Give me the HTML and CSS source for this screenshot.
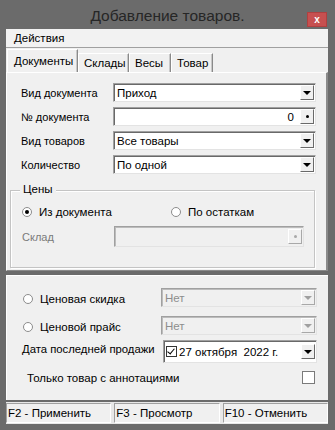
FILE: index.html
```html
<!DOCTYPE html>
<html lang="ru">
<head>
    <meta charset="UTF-8">
    <title>Добавление товаров.</title>
    <link rel="stylesheet" href="styles.css">
</head>
<body>
    <div class="window">
        <div class="titlebar">
            <div class="title">Добавление товаров.</div>
            <button class="close-btn">x</button>
        </div>

        <div class="client">
            <div class="menubar"><span class="menu-item">Действия</span></div>

            <div class="tabs">
                <div class="tab active">Документы</div>
                <div class="tab tab-sklad">Склады</div>
                <div class="tab tab-vesy">Весы</div>
                <div class="tab tab-tovar">Товар</div>
            </div>

            <div class="page">
                <div class="row">
                    <div class="label">Вид документа</div>
                    <div class="field">
                        <span class="field-text">Приход</span>
                        <span class="drop-btn"><span class="arrow"></span></span>
                    </div>
                </div>
                <div class="row">
                    <div class="label">№ документа</div>
                    <div class="field">
                        <span class="field-text num">0</span>
                        <span class="drop-btn"><span class="dot"></span></span>
                    </div>
                </div>
                <div class="row">
                    <div class="label">Вид товаров</div>
                    <div class="field">
                        <span class="field-text">Все товары</span>
                        <span class="drop-btn"><span class="arrow"></span></span>
                    </div>
                </div>
                <div class="row">
                    <div class="label">Количество</div>
                    <div class="field">
                        <span class="field-text">По одной</span>
                        <span class="drop-btn"><span class="arrow"></span></span>
                    </div>
                </div>

                <div class="group">
                    <div class="group-title">Цены</div>
                    <div class="radio-row">
                        <label class="radio-label col-left"><span class="radio checked"></span>Из документа</label>
                        <label class="radio-label"><span class="radio"></span>По остаткам</label>
                    </div>
                    <div class="row sklad-row">
                        <div class="label disabled-text">Склад</div>
                        <div class="field disabled tall">
                            <span class="field-text"></span>
                            <span class="drop-btn"><span class="dot grey"></span></span>
                        </div>
                    </div>
                </div>
            </div>
        </div>

        <div class="panel">
            <div class="prow">
                <label class="radio-label wide"><span class="radio"></span>Ценовая скидка</label>
                <div class="field disabled short">
                    <span class="field-text">Нет</span>
                    <span class="drop-btn"><span class="arrow grey"></span></span>
                </div>
            </div>
            <div class="prow">
                <label class="radio-label wide"><span class="radio"></span>Ценовой прайс</label>
                <div class="field disabled short">
                    <span class="field-text">Нет</span>
                    <span class="drop-btn"><span class="arrow grey"></span></span>
                </div>
            </div>
            <div class="prow date-row">
                <div class="date-label">Дата последней продажи</div>
                <div class="field date">
                    <span class="check checked"></span>
                    <span class="field-text">27 октября&nbsp; 2022 г.</span>
                    <span class="drop-btn"><span class="arrow"></span></span>
                </div>
            </div>
            <div class="prow check-row">
                <div class="check-label">Только товар с аннотациями</div>
                <span class="check big"></span>
            </div>
        </div>

        <div class="statusbar">
            <div class="status-cell">F2 - Применить</div>
            <div class="status-cell">F3 - Просмотр</div>
            <div class="status-cell">F10 - Отменить</div>
        </div>
    </div>
</body>
</html>
```

FILE: styles.css
```css
body {
    margin: 0;
    padding: 0;
    font-family: 'Liberation Sans', Arial, sans-serif;
    font-size: 11px;
    color: #000;
    background: #6b6b6b;
}

.window {
    width: 335px;
    height: 430px;
    background: #6b6b6b;
    position: relative;
}

/* заголовок окна */
.titlebar {
    height: 29px;
    display: flex;
    align-items: center;
    justify-content: center;
}

.title {
    font-size: 15.5px;
    color: #262626;
    margin-top: 3px;
}

.close-btn {
    position: absolute;
    top: 12px;
    right: 8px;
    width: 20px;
    height: 15px;
    padding: 0;
    border: 1px solid #b04040;
    background: #c75050;
    color: #fff;
    font-family: 'Liberation Sans', Arial, sans-serif;
    font-size: 10px;
    font-weight: 700;
    line-height: 11px;
}

/* клиентская часть */
.client {
    margin: 0 7px 0 6px;
    background: #f0f0f0;
}

.menubar {
    height: 18px;
    border-bottom: 1px solid #a0a0a0;
    display: flex;
    align-items: center;
    background: #f2f2f2;
}

.menu-item {
    padding-left: 8px;
    font-size: 11.5px;
}

.tabs {
    height: 24px;
    display: flex;
    align-items: flex-end;
    padding-left: 1px;
}

.tab {
    height: 19px;
    line-height: 19px;
    box-sizing: border-box;
    border-top: 1px solid #fff;
    border-left: 1px solid #fff;
    border-right: 1px solid #8a8a8a;
    box-shadow: inset -1px 0 0 #c8c8c8;
    padding-left: 5px;
    width: 51px;
    font-size: 11.5px;
}

.tab.active {
    height: 23px;
    line-height: 23px;
    width: 71px;
    padding-left: 6px;
}

.tab-vesy {
    width: 42px;
}

.tab-tovar {
    width: 42px;
}

.page {
    height: 199px;
    box-sizing: border-box;
    border-top: 1px solid #fff;
    border-left: 1px solid #fff;
    border-right: 2px solid #8a8a8a;
    border-bottom: 1px solid #8a8a8a;
    padding: 10px 10px 0 14px;
}

.row {
    display: flex;
    align-items: center;
    height: 19px;
    margin-bottom: 5px;
}

.label {
    width: 92px;
    flex-shrink: 0;
}

.field {
    flex: 1;
    height: 19px;
    box-sizing: border-box;
    background: #fff;
    border-top: 1px solid #a0a0a0;
    border-left: 1px solid #a0a0a0;
    border-right: 1px solid #e3e3e3;
    border-bottom: 1px solid #e3e3e3;
    box-shadow: inset 1px 1px 0 #696969;
    display: flex;
    align-items: center;
}

.field-text {
    flex: 1;
    padding-left: 3px;
    white-space: nowrap;
    font-size: 11.5px;
}

.field-text.num {
    text-align: right;
    padding-right: 6px;
}

.drop-btn {
    width: 14px;
    height: 15px;
    margin-right: 1px;
    box-sizing: border-box;
    background: #f0f0f0;
    border-top: 1px solid #fff;
    border-left: 1px solid #fff;
    border-right: 1px solid #696969;
    border-bottom: 1px solid #696969;
    display: flex;
    align-items: center;
    justify-content: center;
}

.arrow {
    width: 0;
    height: 0;
    border-left: 4px solid transparent;
    border-right: 4px solid transparent;
    border-top: 4px solid #000;
    margin-top: 1px;
}

.arrow.grey {
    border-top-color: #a0a0a0;
}

.dot {
    width: 3px;
    height: 3px;
    border-radius: 50%;
    background: #000;
}

.dot.grey {
    background: #a8a8a8;
}

/* группа «Цены» */
.group {
    position: relative;
    margin: 16px 1px 0 -11px;
    padding: 14px 10px 0 11px;
    height: 62px;
    border: 1px solid #c4c4c4;
    box-shadow: 1px 1px 0 #fff, inset 1px 1px 0 #fff;
}

.group-title {
    position: absolute;
    top: -8px;
    left: 9px;
    padding: 0 3px;
    background: #f0f0f0;
    font-size: 11.5px;
}

.radio-row {
    display: flex;
    align-items: center;
    height: 14px;
    margin-bottom: 7px;
}

.radio-label {
    display: flex;
    align-items: center;
    font-size: 11.5px;
}

.col-left {
    width: 149px;
}

.radio {
    width: 10px;
    height: 10px;
    box-sizing: border-box;
    border-radius: 50%;
    background: #fff;
    border: 1px solid #8c8c8c;
    margin-right: 7px;
    display: flex;
    align-items: center;
    justify-content: center;
}

.radio.checked::after {
    content: '';
    width: 4px;
    height: 4px;
    border-radius: 50%;
    background: #000;
}

.sklad-row {
    height: 21px;
}

.field.tall {
    height: 21px;
}

.disabled-text {
    color: #7a7a7a;
}

.field.disabled {
    background: #f0f0f0;
    color: #8d8d8d;
    box-shadow: inset 1px 1px 0 #bcbcbc;
}

.field.disabled .drop-btn {
    border-right-color: #a8a8a8;
    border-bottom-color: #a8a8a8;
}

/* нижняя панель */
.panel {
    margin: 4px 7px 0 6px;
    height: 125px;
    box-sizing: border-box;
    background: #f0f0f0;
    border-top: 1px solid #fff;
    border-left: 1px solid #fff;
    padding: 12px 11px 0 15px;
}

.prow {
    display: flex;
    align-items: center;
    height: 19px;
    margin-bottom: 9px;
}

.radio-label.wide {
    width: 138px;
    padding-left: 1px;
    margin-top: 2px;
}

.field.short {
    flex: 1;
}

.date-row {
    height: 23px;
    margin-top: -4px;
    margin-bottom: 8px;
}

.date-label {
    width: 141px;
    margin-top: -6px;
    white-space: nowrap;
    font-size: 11.3px;
}

.field.date {
    height: 23px;
}

.field.date .field-text {
    padding-left: 2px;
    font-size: 11.5px;
}

.check {
    width: 11px;
    height: 11px;
    box-sizing: border-box;
    background: #fff;
    border: 1px solid #333;
    margin-left: 2px;
    position: relative;
}

.check.checked::after {
    content: '';
    position: absolute;
    left: 2px;
    top: 0;
    width: 3px;
    height: 6px;
    border-right: 1px solid #000;
    border-bottom: 1px solid #000;
    transform: rotate(40deg);
}

.check-row {
    height: 13px;
    padding-left: 5px;
}

.check-label {
    flex: 1;
    font-size: 11.5px;
}

.check.big {
    width: 13px;
    height: 13px;
    border: 1px solid #7a7a7a;
    margin-right: 2px;
}

/* строка состояния */
.statusbar {
    margin: 2px 7px 0 6px;
    height: 22px;
    display: flex;
    gap: 3px;
    background: #e8e8e8;
    padding-top: 1px;
    box-sizing: border-box;
}

.status-cell {
    flex: 1;
    height: 20px;
    line-height: 19px;
    box-sizing: border-box;
    background: #f0f0f0;
    border-top: 1px solid #a0a0a0;
    border-left: 1px solid #a0a0a0;
    border-right: 1px solid #fff;
    border-bottom: 1px solid #fff;
    padding-left: 1px;
    white-space: nowrap;
    font-size: 11.5px;
}
```
